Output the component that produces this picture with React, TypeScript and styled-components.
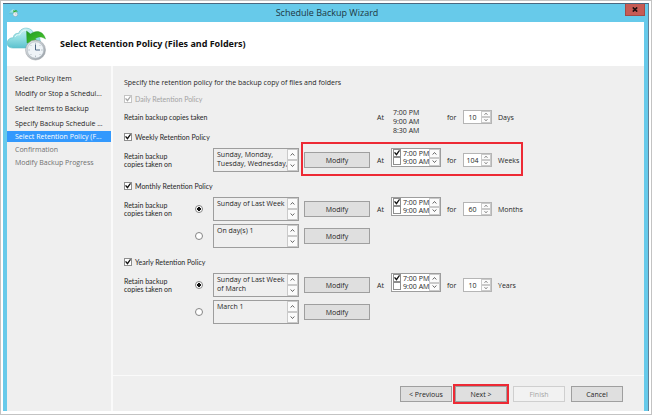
import React, { useId } from "react";
import styled, { createGlobalStyle, css } from "styled-components";

const ui = `"Open Sans", "Noto Sans", sans-serif`;
const compact = `Lato, "Liberation Sans", sans-serif`;

const GlobalStyle = createGlobalStyle`
  *, *::before, *::after { box-sizing: border-box; }
  html, body { margin: 0; background: #fff; }
  body { font: 7px/9px ${ui}; color: #262626; }
  button, input, textarea { font: inherit; color: inherit; margin: 0; }
`;

const Frame = styled.div`
  display: flex;
  min-height: 100vh;
  padding: 2px 2px 3px;
  border: 1px solid #c3c3c3;
`;

const Window = styled.div`
  flex: 1;
  display: flex;
  flex-direction: column;
  background: #67caea;
  border-top: 1px solid #4c6880;
  border-right: 1px solid #5f7f96;
`;

const TitleBar = styled.header`
  display: grid;
  grid-template-columns: 40px 1fr 40px;
  align-items: center;
  height: 18px;
  padding: 0 3px 0 6px;
`;

const Title = styled.h1`
  margin: 0;
  text-align: center;
  font-size: 9px;
  line-height: 12px;
  font-weight: 400;
  color: #1d3742;
`;

const CloseButton = styled.button`
  display: flex;
  align-items: center;
  justify-content: center;
  justify-self: end;
  align-self: start;
  width: 20px;
  height: 12px;
  padding: 0;
  border: 1px solid #a34a45;
  border-top: 0;
  background: #c75b54;
`;

const Client = styled.div`
  flex: 1;
  display: flex;
  flex-direction: column;
  margin: 0 4px;
  background: #efefef;
`;

const Banner = styled.div`
  display: flex;
  align-items: center;
  gap: 13px;
  height: 44px;
  background: #fff;
`;

const Heading = styled.h2`
  margin: 0;
  font-family: "Noto Sans", "Open Sans", sans-serif;
  font-size: 9px;
  line-height: 12px;
  font-weight: 700;
  color: #111;
`;

const Body = styled.div`
  flex: 1;
  display: flex;
`;

const Sidebar = styled.nav`
  flex: 0 0 106px;
  padding-top: 5px;
  border-right: 2px solid #fafafa;
`;

const Steps = styled.ol`
  margin: 0;
  padding: 0;
  list-style: none;
`;

const Step = styled.li<{ $state: "done" | "current" | "todo" }>`
  line-height: ${(p) => (p.$state === "done" ? "15px" : p.$state === "current" ? "11px" : "13px")};
  margin-bottom: ${(p) => (p.$state === "current" ? "1px" : "0")};
  padding-left: 8px;
  white-space: nowrap;
  color: ${(p) => (p.$state === "current" ? "#fff" : p.$state === "todo" ? "#6f6f6f" : "#1c1c1c")};
  background: ${(p) => (p.$state === "current" ? "#3399fd" : "transparent")};
`;

const Main = styled.main`
  flex: 1;
  display: flex;
  flex-direction: column;
`;

const Form = styled.form`
  flex: 1;
  padding: 12px 11px 0;
  border-bottom: 1px solid #fafafa;
`;

const Intro = styled.p`
  margin: 0 0 6px;
  line-height: 10px;
`;

const Section = styled.section<{ $short?: boolean }>`
  margin-bottom: ${(p) => (p.$short ? "6px" : "9px")};
`;

const CheckLabel = styled.label<{ $muted?: boolean }>`
  display: flex;
  align-items: center;
  gap: 3px;
  height: 10px;
  margin-bottom: ${(p) => (p.$muted ? "4px" : "6px")};
  font-family: ${compact};
  color: ${(p) => (p.$muted ? "#a3a3a3" : "#262626")};
`;

const CheckBox = styled.input.attrs({ type: "checkbox" })`
  appearance: none;
  flex: none;
  width: 8px;
  height: 8px;
  border: 1px solid #8e8e8e;
  background: #fff;
  display: grid;
  place-items: center;
  &:checked::before {
    content: "";
    width: 6px;
    height: 6px;
    background: #111;
    clip-path: polygon(0 45%, 18% 32%, 40% 58%, 84% 0, 100% 14%, 42% 96%);
  }
  &:disabled { border-color: #c4c4c4; }
  &:disabled::before { background: #a8a8a8; }
`;

const Radio = styled.input.attrs({ type: "radio" })`
  appearance: none;
  width: 8px;
  height: 8px;
  border: 1px solid #858585;
  border-radius: 50%;
  background: #fff;
  &:checked { background: radial-gradient(circle, #111 0 2px, #fff 2px); }
`;

const Row = styled.div<{ $short?: boolean }>`
  display: flex;
  align-items: center;
  height: ${(p) => (p.$short ? "18px" : "24px")};
  & + & { margin-top: 3px; }
`;

const Lead = styled.div`
  flex: 0 0 71px;
  font-family: ${compact};
  line-height: 8px;
  white-space: nowrap;
`;

const RadioCell = styled.div`
  flex: 0 0 18px;
  display: flex;
`;

const Daily = styled.div`
  flex: 0 0 246px;
  font-family: ${compact};
`;

const ListBox = styled.div`
  flex: 0 0 86px;
  min-width: 0;
  display: flex;
  height: 24px;
  margin-right: 5px;
  border: 1px solid #9d9d9d;
`;

const ListText = styled.textarea`
  flex: 1;
  width: 0;
  min-width: 0;
  padding: 1px 0 0 3px;
  border: 0;
  background: transparent;
  resize: none;
  overflow: hidden;
  white-space: pre;
`;

const Scroller = styled.div<{ $width: number }>`
  flex: 0 0 ${(p) => p.$width}px;
  display: flex;
  flex-direction: column;
`;

const Arrow = styled.button`
  flex: 1;
  min-height: 0;
  display: flex;
  align-items: center;
  justify-content: center;
  padding: 0;
  border: 1px solid #cacaca;
  background: #fbfbfb;
  color: #555;
`;

const Settings = styled.div<{ $marked?: boolean }>`
  position: relative;
  display: flex;
  align-items: center;
  height: 100%;
  ${(p) =>
    p.$marked &&
    css`
      padding-right: 2px;
      &::after {
        content: "";
        position: absolute;
        inset: -6px -2px -4px -3px;
        border: 2px solid #ed2a35;
        pointer-events: none;
      }
    `}
`;

const Button = styled.button<{ $wide?: boolean; $marked?: boolean }>`
  flex: none;
  width: ${(p) => (p.$wide ? 66 : 52)}px;
  height: 16px;
  padding: 0;
  border: 1px solid #9f9f9f;
  background: #dfdfdf;
  outline: ${(p) => (p.$marked ? "2px solid #ed2a35" : "none")};
  &:disabled {
    color: #a5a5a5;
    border-color: #cfcfcf;
    background: #f2f2f2;
  }
`;

const At = styled.span`
  flex: 0 0 21px;
  padding-left: 7px;
`;

const For = styled.span`
  flex: 0 0 22px;
  padding-left: 6px;
`;

const TimeText = styled.span`
  flex: 0 0 50px;
  align-self: flex-start;
  padding-left: 2px;
`;

const TimeBox = styled.div`
  flex: 0 0 50px;
  min-width: 0;
  align-self: flex-start;
  display: flex;
  height: 19px;
  border: 1px solid #9d9d9d;
  background: #fff;
`;

const TimeList = styled.div`
  flex: 1;
  min-width: 0;
  padding-left: 1px;
`;

const TimeOption = styled.label`
  display: flex;
  align-items: center;
  gap: 2px;
  height: 8px;
  white-space: nowrap;
`;

const SpinBox = styled.div`
  flex: 0 0 29px;
  min-width: 0;
  display: flex;
  height: 14px;
  border: 1px solid #b5b5b5;
  background: #fff;
`;

const SpinInput = styled.input`
  flex: 1;
  width: 0;
  min-width: 0;
  padding: 0;
  border: 0;
  background: transparent;
  text-align: center;
`;

const Unit = styled.label`
  padding-left: 6px;
`;

const Footer = styled.footer`
  display: flex;
  justify-content: flex-end;
  gap: 6px;
  padding: 10px 21px 9px 0;
`;

const StepButtons = styled.div`
  display: flex;
  gap: 3px;
`;

function Chevron({ up, size = 5 }: { up?: boolean; size?: number }) {
  return (
    <svg width={size} height={size} viewBox="0 0 6 6" fill="none" stroke="currentColor" strokeWidth="1.1" aria-hidden="true">
      <path d={up ? "M.8 4.200 3 1.800l2.200 2.400" : "M.8 1.800 3 4.200l2.200-2.400"} />
    </svg>
  );
}

function Arrows({ width, size }: { width: number; size?: number }) {
  return (
    <Scroller $width={width}>
      <Arrow type="button" aria-label="Up"><Chevron up size={size} /></Arrow>
      <Arrow type="button" aria-label="Down"><Chevron size={size} /></Arrow>
    </Scroller>
  );
}

function BackupIcon({ width, height }: { width: number; height: number }) {
  const id = useId();
  return (
    <svg width={width} height={height} viewBox="0 0 40 34" aria-hidden="true">
      <defs>
        <linearGradient id={`${id}c`} x1="0" y1="0" x2="0" y2="1">
          <stop offset="0" stopColor="#c9f1f2" />
          <stop offset=".55" stopColor="#8edce2" />
          <stop offset="1" stopColor="#5bc2ce" />
        </linearGradient>
        <linearGradient id={`${id}g`} x1="0" y1="0" x2="1" y2="1">
          <stop offset="0" stopColor="#1d9a22" />
          <stop offset="1" stopColor="#4ecb2e" />
        </linearGradient>
        <linearGradient id={`${id}s`} x1="0" y1="0" x2="1" y2="1">
          <stop offset="0" stopColor="#eceff2" />
          <stop offset="1" stopColor="#939ba2" />
        </linearGradient>
      </defs>
      <path
        d="M6 21C1.500 21-.5 18 .3 15c.7-3 3.200-4.500 6-4.200C6.500 7.500 9 6 11.500 6.400 13 2.500 16.500.8 20 1.200c4 .4 6.500 3 7 6.500 4 .3 6.500 3.300 6.200 7-.2 4-3 6.300-6.700 6.300z"
        fill={`url(#${id}c)`}
        stroke="#62bdc8"
        strokeWidth=".6"
      />
      <path d="M8 10c1-2.200 3-2.500 4.500-2 1.200-3.200 4-5 7-4.800" fill="none" stroke="#effcfc" strokeWidth="1" opacity=".8" />
      <path
        d="M19.500 4 23.500 7C29 2.500 36.500 4 38.500 12 35 9.500 31 9.500 28 11.800L31.500 15l-11.500 1z"
        fill={`url(#${id}g)`}
        stroke="#238f23"
        strokeWidth=".4"
      />
      <circle cx="28.500" cy="23" r="10" fill={`url(#${id}s)`} stroke="#949ba1" strokeWidth=".5" />
      <circle cx="28.500" cy="23" r="8.200" fill="#eef3f7" stroke="#a7b0b8" strokeWidth=".5" />
      <path d="M28.500 15.800v1.600M28.500 28.600v1.600M21.300 23h1.600M34.100 23h1.600M23.400 17.900l1 1M33.600 17.900l-1 1M23.400 28.100l1-1M33.600 28.100l-1-1" stroke="#9aa5ae" strokeWidth=".7" />
      <path d="M28.500 17.500V23H33" fill="none" stroke="#4c6785" strokeWidth="1" />
    </svg>
  );
}

function Spinner({ value, unit }: { value: string; unit: string }) {
  const id = useId();
  return (
    <>
      <For>for</For>
      <SpinBox>
        <SpinInput id={id} type="text" inputMode="numeric" defaultValue={value} />
        <Arrows width={10} size={4} />
      </SpinBox>
      <Unit htmlFor={id}>{unit}</Unit>
    </>
  );
}

interface Policy {
  name: string;
  choices: string[];
  value: string;
  unit: string;
  marked?: boolean;
}

const policies: Policy[] = [
  { name: "Weekly", choices: ["Sunday, Monday,\nTuesday, Wednesday,"], value: "104", unit: "Weeks", marked: true },
  { name: "Monthly", choices: ["Sunday of Last Week", "On day(s) 1"], value: "60", unit: "Months" },
  { name: "Yearly", choices: ["Sunday of Last Week\nof March", "March 1"], value: "10", unit: "Years" },
];

function PolicySection({ name, choices, value, unit, marked }: Policy) {
  return (
    <Section>
      <CheckLabel>
        <CheckBox defaultChecked />
        {name} Retention Policy
      </CheckLabel>
      {choices.map((choice, i) => (
        <Row key={choice}>
          <Lead>{i === 0 && <>Retain backup<br />copies taken on</>}</Lead>
          <RadioCell>
            {choices.length > 1 && <Radio name={name} aria-label={choice} defaultChecked={i === 0} />}
          </RadioCell>
          <ListBox>
            <ListText readOnly rows={2} aria-label={`${name} copies taken on`} defaultValue={choice} />
            <Arrows width={11} />
          </ListBox>
          <Settings $marked={marked}>
            <Button type="button" $wide>Modify</Button>
            {i === 0 && (
              <>
                <At>At</At>
                <TimeBox>
                  <TimeList>
                    <TimeOption><CheckBox defaultChecked />7:00 PM</TimeOption>
                    <TimeOption><CheckBox />9:00 AM</TimeOption>
                  </TimeList>
                  <Arrows width={11} />
                </TimeBox>
                <Spinner value={value} unit={unit} />
              </>
            )}
          </Settings>
        </Row>
      ))}
    </Section>
  );
}

const steps: { label: string; state: "done" | "current" | "todo" }[] = [
  { label: "Select Policy Item", state: "done" },
  { label: "Modify or Stop a Schedul...", state: "done" },
  { label: "Select Items to Backup", state: "done" },
  { label: "Specify Backup Schedule ...", state: "done" },
  { label: "Select Retention Policy (F...", state: "current" },
  { label: "Confirmation", state: "todo" },
  { label: "Modify Backup Progress", state: "todo" },
];

export default function App() {
  return (
    <>
      <GlobalStyle />
      <Frame>
        <Window>
          <TitleBar>
            <BackupIcon width={9} height={8} />
            <Title>Schedule Backup Wizard</Title>
            <CloseButton aria-label="Close">
              <svg width="6" height="5" viewBox="0 0 6 5" stroke="#1f1010" strokeWidth="1.600" aria-hidden="true">
                <path d="M.8.4 5.200 4.600M5.200.4.8 4.600" />
              </svg>
            </CloseButton>
          </TitleBar>
          <Client>
            <Banner>
              <BackupIcon width={40} height={34} />
              <Heading>Select Retention Policy (Files and Folders)</Heading>
            </Banner>
            <Body>
              <Sidebar>
                <Steps>
                  {steps.map((s) => (
                    <Step key={s.label} $state={s.state}>{s.label}</Step>
                  ))}
                </Steps>
              </Sidebar>
              <Main>
                <Form>
                  <Intro>Specify the retention policy for the backup copy of files and folders</Intro>
                  <Section $short>
                    <CheckLabel $muted>
                      <CheckBox defaultChecked disabled />
                      Daily Retention Policy
                    </CheckLabel>
                    <Row $short>
                      <Daily>Retain backup copies taken</Daily>
                      <Settings>
                        <At>At</At>
                        <TimeText>7:00 PM<br />9:00 AM<br />8:30 AM</TimeText>
                        <Spinner value="10" unit="Days" />
                      </Settings>
                    </Row>
                  </Section>
                  {policies.map((p) => (
                    <PolicySection key={p.name} {...p} />
                  ))}
                </Form>
                <Footer>
                  <StepButtons>
                    <Button type="button">&lt; Previous</Button>
                    <Button type="button" $marked>Next &gt;</Button>
                  </StepButtons>
                  <Button type="button" disabled>Finish</Button>
                  <Button type="button">Cancel</Button>
                </Footer>
              </Main>
            </Body>
          </Client>
        </Window>
      </Frame>
    </>
  );
}
